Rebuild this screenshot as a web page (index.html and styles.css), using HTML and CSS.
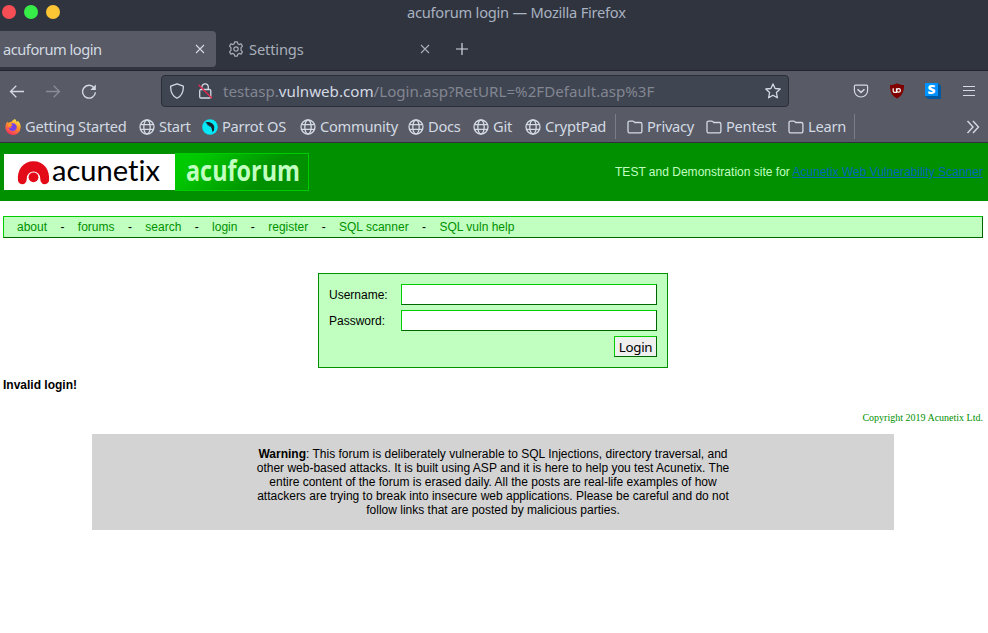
FILE: index.html
```html
<!DOCTYPE html>
<html lang="en">
<head>
<meta charset="utf-8">
<title>acuforum login</title>
<link rel="stylesheet" href="styles.css">
</head>
<body>
<svg class="defs" width="0" height="0">
  <symbol id="globe" viewBox="0 0 16 16"><g fill="none" stroke="currentColor" stroke-width="1.3"><circle cx="8" cy="8" r="7"/><ellipse cx="8" cy="8" rx="3.2" ry="7"/><path d="M1.500 5.700h13M1.500 10.300h13"/></g></symbol>
  <symbol id="folder" viewBox="0 0 16 16"><path d="M2.600 2.100h3.200c.5 0 .8.2 1.100.5l.8.9h5.600a1.600 1.600 0 0 1 1.600 1.600v7.200a1.600 1.600 0 0 1-1.600 1.600H2.600A1.600 1.600 0 0 1 1 12.300V3.700a1.600 1.600 0 0 1 1.600-1.600z" fill="none" stroke="currentColor" stroke-width="1.300"/></symbol>
  <symbol id="close" viewBox="0 0 10 10"><path d="M1 1l8 8M9 1L1 9" fill="none" stroke="currentColor" stroke-width="1.1"/></symbol>
</svg>
<div class="browser">
  <div class="titlebar"><div class="lights"><i class="red"></i><i class="green"></i><i class="amber"></i></div><div class="title">acuforum login — Mozilla Firefox</div></div>
  <div class="tabs">
    <div class="tab active"><span>acuforum login</span><svg class="x" width="10" height="10"><use href="#close"/></svg></div>
    <div class="tab"><svg class="gear" width="16" height="16" viewBox="0 0 16 16"><g fill="none" stroke="currentColor" stroke-width="1.2" stroke-linejoin="round"><path d="M6.7.8h2.6l.5 2 1.3.8 2-.7 1.400 2.300-1.500 1.500v2.600l1.500 1.500-1.400 2.300-2-.7-1.300.8-.5 2H6.700l-.5-2-1.300-.8-2 .7-1.400-2.300L3 9.300V6.700L1.500 5.200l1.400-2.300 2 .7 1.300-.8z"/><circle cx="8" cy="8" r="2.200"/></g></svg><span class="settings">Settings</span><svg class="x" width="10" height="10"><use href="#close"/></svg></div>
    <svg class="plus" width="12" height="12" viewBox="0 0 12 12"><path d="M6 0v12M0 6h12" stroke="currentColor" stroke-width="1.2"/></svg>
  </div>
  <div class="toolbar">
    <svg class="back" width="16" height="16" viewBox="0 0 16 16"><path d="M15 8.500H1.500M7.300 2.700L1.500 8.500l5.800 5.800" fill="none" stroke="currentColor" stroke-width="1.3"/></svg>
    <svg class="forward" width="16" height="16" viewBox="0 0 16 16"><path d="M1 8.500h13.500M8.700 2.700L14.500 8.500l-5.800 5.800" fill="none" stroke="currentColor" stroke-width="1.3"/></svg>
    <svg class="reload" width="16" height="16" viewBox="0 0 16 16"><path d="M13 4.700A6.400 6.400 0 1 0 14.400 9.200" fill="none" stroke="currentColor" stroke-width="1.4"/><path d="M14.800 1.500v5.500H9.300z" fill="currentColor"/></svg>
    <div class="urlbar">
      <svg class="shield" width="16" height="16" viewBox="0 0 16 16"><path d="M8 .8l6.300 2.300c.3 5.700-1.600 9.700-6.300 12.200C3.300 12.800 1.400 8.800 1.700 3.100z" fill="none" stroke="currentColor" stroke-width="1.3" stroke-linejoin="round"/></svg>
      <svg class="lock" width="16" height="16" viewBox="0 0 16 16"><path d="M4.900 6.500V4a3.200 3.200 0 0 1 6.400 0v2.500M4 6.500h8.500a1.300 1.300 0 0 1 1.300 1.300v5.900a1.300 1.300 0 0 1-1.300 1.300H4a1.300 1.300 0 0 1-1.300-1.300V7.800A1.300 1.300 0 0 1 4 6.500z" fill="none" stroke="currentColor" stroke-width="1.300"/><path d="M1.500 1.800L15 15.300" stroke="#e22850" stroke-width="1.4"/></svg>
      <span class="url">testasp.<b>vulnweb.com</b>/Login.asp?RetURL=%2FDefault.asp%3F</span>
      <svg class="star" width="16" height="16" viewBox="0 0 16 16"><path d="M8 .9l2.100 4.600 5.100.5-3.800 3.500 1 5.300L8 12.200l-4.400 2.600 1-5.300L.8 6l5.100-.5z" fill="none" stroke="currentColor" stroke-width="1.300" stroke-linejoin="round"/></svg>
    </div>
    <div class="actions">
      <svg width="16" height="16" viewBox="0 0 16 16"><path d="M2.500 2.200h11c.7 0 1.100.4 1.100 1.100v4.100a6.600 6.600 0 0 1-13.200 0V3.300c0-.7.4-1.100 1.100-1.100z" fill="none" stroke="currentColor" stroke-width="1.200"/><path d="M4.500 6.200L8 9.400l3.500-3.200" fill="none" stroke="currentColor" stroke-width="1.500"/></svg>
      <svg width="16" height="16" viewBox="0 0 16 16"><path d="M8 .3c2 1.300 4.200 1.700 7 1.800 0 6.500-1.300 10.400-7 13.500C2.300 12.500 1 8.600 1 2.100 3.800 2 6 1.600 8 .3z" fill="#800000"/><path d="M4.200 5.300v2.800q0 1.300 1.300 1.300h2V5.300M9.600 5.600a1.800 1.800 0 1 1 0 3.600 1.800 1.800 0 1 1 0-3.600" fill="none" stroke="#fff" stroke-width="1.200"/></svg>
      <svg width="16" height="16" viewBox="0 0 16 16"><path d="M13 0l3 3v13H3l-3-3z" fill="#0059a0"/><path d="M0 0h13v13H0z" fill="#0092ff"/><text x="2.600" y="10.800" class="s-mark" textLength="8" lengthAdjust="spacingAndGlyphs">S</text></svg>
      <svg width="16" height="16" viewBox="0 0 16 16"><path d="M2 3.500h12M2 7.500h12M2 12.500h12" stroke="currentColor" stroke-width="1.200"/></svg>
    </div>
  </div>
  <div class="bookmarks">
    <div class="bm w134"><svg width="16" height="16" viewBox="0 0 16 16"><defs><linearGradient id="fire" x1=".8" y1="0" x2=".3" y2="1"><stop stop-color="#fff44f"/><stop offset=".4" stop-color="#ff9a27"/><stop offset="1" stop-color="#f82c60"/></linearGradient></defs><path d="M10 0c1 1 1.400 2 1.500 3 .7-.1 1.200-.6 1.400-1.200 2 2 3 4.400 2.700 7A7.600 7.600 0 0 1 .4 8C.4 6 1 4 2.400 2.400L3 4c1-.8 2-1.200 3.200-1C6.700 2.300 8 1 10 0z" fill="url(#fire)"/><path d="M5.500 5c3-2 6.500.4 6.300 3.200-.1 2.300-2 3.800-4.100 3.700-2.300-.1-3.800-1.700-3.900-3.500 1 .7 2.200.6 2.900 0C5.500 7.700 5 6.500 5.500 5z" fill="#7542e5"/><path d="M3 4.500l3 .3 1.600 1.500-2 1.300H3z" fill="#ff9826"/></svg><span>Getting Started</span></div>
    <div class="bm w63"><svg width="16" height="16"><use href="#globe"/></svg><span>Start</span></div>
    <div class="bm w98"><svg width="16" height="16" viewBox="0 0 16 16"><circle cx="8" cy="8" r="7.800" fill="#05e8f6"/><path d="M3.200 3.600C6 2 11.500 3.600 12.300 8l-.4 4.600-1-1-.4 2.300c-.6-2.200-.3-4-1.800-6.400L7.600 7.800 7 6.400 5.600 6.500 5.300 5z" fill="#15232b"/></svg><span>Parrot OS</span></div>
    <div class="bm w108"><svg width="16" height="16"><use href="#globe"/></svg><span>Community</span></div>
    <div class="bm w65"><svg width="16" height="16"><use href="#globe"/></svg><span>Docs</span></div>
    <div class="bm w52"><svg width="16" height="16"><use href="#globe"/></svg><span>Git</span></div>
    <div class="bm w90"><svg width="16" height="16"><use href="#globe"/></svg><span>CryptPad</span></div>
    <i class="sep"></i>
    <div class="bm w79"><svg width="16" height="16"><use href="#folder"/></svg><span>Privacy</span></div>
    <div class="bm w82"><svg width="16" height="16"><use href="#folder"/></svg><span>Pentest</span></div>
    <div class="bm w66"><svg width="16" height="16"><use href="#folder"/></svg><span>Learn</span></div>
    <i class="sep"></i>
    <svg class="more" width="14" height="14" viewBox="0 0 14 14"><path d="M1.500 1L7 7l-5.500 6M7 1l5.500 6L7 13" fill="none" stroke="currentColor" stroke-width="1.400"/></svg>
  </div>
</div>
<div class="page">
  <header class="masthead">
    <svg class="logo" width="306" height="38" viewBox="0 0 306 38">
      <defs><linearGradient id="brand" x1="0" y1="0" x2="1" y2=".28"><stop offset="0" stop-color="#00cc00"/><stop offset=".2" stop-color="#00c800"/><stop offset=".8" stop-color="#009000"/></linearGradient></defs>
      <path d="M1 1h171v36H1z" fill="#fff"/>
      <path d="M172 .5h133.500v37H172z" fill="url(#brand)"/>
      <path d="M172 .5h133.500v37H172" fill="none" stroke="#00cc00"/>
      <path d="M19.500 31.200c-2.300 0-4-1.300-4.500-3.500C13.800 16.500 20.500 8.300 30.500 8.300S47.200 16.500 46 27.700c-.5 2.200-2.200 3.500-4.500 3.500-2 0-3-1-3.600-2.600h-14.800c-.6 1.600-1.600 2.600-3.600 2.600z" fill="#e30b17"/>
      <path d="M23.800 25.300a6.700 6.700 0 1 1 13.400 0l.8 6h-15z" fill="#fff"/>
      <circle cx="30.500" cy="24.300" r="4.900" fill="#e30b17"/>
      <text class="name" x="49" y="28" textLength="108" lengthAdjust="spacingAndGlyphs">acunetix</text>
      <text class="forum" x="183" y="28" textLength="114" lengthAdjust="spacingAndGlyphs">acuforum</text>
    </svg>
    <div class="tagline">TEST and Demonstration site for <a href="#">Acunetix Web Vulnerability Scanner</a></div>
  </header>
  <nav class="menu"><a>about</a><i>-</i><a>forums</a><i>-</i><a>search</a><i>-</i><a>login</a><i>-</i><a>register</a><i>-</i><a>SQL scanner</a><i>-</i><a>SQL vuln help</a></nav>
  <form class="login">
    <label for="user">Username:</label><input id="user" type="text">
    <label for="pass">Password:</label><input id="pass" type="password">
    <button type="button">Login</button>
  </form>
  <div class="error">Invalid login!</div>
  <div class="copyright">Copyright 2019 Acunetix Ltd.</div>
  <div class="warning"><p><b>Warning</b>: This forum is deliberately vulnerable to SQL Injections, directory traversal, and<br>other web-based attacks. It is built using ASP and it is here to help you test Acunetix. The<br>entire content of the forum is erased daily. All the posts are real-life examples of how<br>attackers are trying to break into insecure web applications. Please be careful and do not<br>follow links that are posted by malicious parties.</p></div>
</div>
</body>
</html>
```
FILE: styles.css
```css
* { box-sizing: border-box; }
body { margin: 0; background: #fff; overflow: hidden; font: 12px/14px "Liberation Sans", Arial, sans-serif; color: #000; }
svg { display: block; flex: none; }
i { font-style: normal; }
.defs { position: absolute; }

.browser { height: 143px; background: #585a66; border-bottom: 1px solid #2f313d; color: #d3dae3; font: 14.67px/20px "Noto Sans", sans-serif; white-space: nowrap; }
.titlebar { display: flex; height: 31px; background: #30343f; }
.lights { display: flex; gap: 8px; width: 407px; padding: 5px 0 0 2px; }
.lights i { width: 14px; height: 14px; border-radius: 50%; }
.red { background: #f74e56; }
.green { background: #37ee49; }
.amber { background: #fcc536; }
.title { padding-top: 2px; color: #a9b2c0; letter-spacing: -.25px; }

.tabs { display: flex; height: 40px; background: #30343f; border-bottom: 1px solid #22252e; color: #a9afba; }
.tab { display: flex; align-items: center; width: 225px; height: 36px; padding-left: 12px; letter-spacing: -.48px; }
.tab.active { width: 216px; padding-left: 3px; background: #585a66; border-radius: 0 4px 4px 0; color: #d3dae3; }
.tab .x { margin-left: auto; margin-right: 11px; }
.tab:not(.active) .x { margin-right: 11px; }
.settings { letter-spacing: -.15px; }
.gear { margin-right: 5px; }
.plus { margin: 12px 0 0 15px; color: #d3dae3; }

.toolbar { display: flex; align-items: center; height: 40px; }
.back { margin-left: 9px; }
.forward { margin-left: 20px; opacity: .4; }
.reload { margin-left: 20px; }
.urlbar { display: flex; align-items: center; width: 628px; height: 32px; margin-left: 64px; padding: 0 7px; background: #404552; border: 1px solid #2b2e39; border-radius: 4px; }
.lock { margin-left: 12px; }
.url { margin-left: 10px; font-size: 15.15px; color: #828691; }
.url b { font-weight: 400; color: #d3dae3; }
.star { margin-left: auto; }
.actions { display: flex; gap: 20px; margin-left: 64px; }
.s-mark { font: 900 11.5px "Open Sans", sans-serif; fill: #fff; }

.bookmarks { display: flex; align-items: center; height: 31px; padding-left: 5px; letter-spacing: -.26px; }
.bm { display: flex; align-items: center; gap: 4px; flex: none; }
.bm span { padding-bottom: 2px; }
.w134 { width: 134px; }
.w63 { width: 63px; }
.w98 { width: 98px; }
.w108 { width: 108px; }
.w65 { width: 65px; }
.w52 { width: 52px; }
.w90 { width: 90px; }
.w79 { width: 79px; }
.w82 { width: 82px; }
.w66 { width: 66px; }
.sep { width: 1px; height: 25px; margin-right: 11px; background: #7a7d88; }
.more { margin-left: 100px; }

.masthead { display: flex; justify-content: space-between; align-items: center; height: 58px; padding: 0 5px 0 3px; background: #009000; color: #c0ffc0; }
.logo { overflow: visible; }
.name { font: 29px Lato, sans-serif; font-variant-ligatures: none; }
.forum { font: 700 28px "Open Sans", sans-serif; fill: #c0ffc0; }
.tagline { letter-spacing: .01px; }
.tagline a { color: #0066b8; }
.menu { display: flex; height: 22px; margin: 15px 5px 0 3px; padding: 3px 0 0 13px; background: #c0ffc0; border: 1px solid; border-color: #00cc00 #006600 #006600 #00cc00; }
.menu a { color: #009000; }
.menu i { margin: 0 13.4px; }
.login { display: grid; grid-template-columns: 72px 256px; grid-auto-rows: 21px; row-gap: 5px; width: 350px; height: 95px; margin: 35px 0 0 318px; padding: 10px; background: #c0ffc0; border: 1px solid #009000; }
.login label { padding-top: 4px; }
.login input, .login button { margin: 0; padding: 0; border: 1px solid; border-color: #00cc00 #006600 #006600 #00cc00; border-radius: 0; outline: 0; }
.login input { width: 256px; height: 21px; background: #fff; }
.login button { grid-column: 2; justify-self: end; width: 43px; height: 21px; padding-top: 1px; background: #efefef; color: #000; font: 13.33px/18px "Noto Sans", sans-serif; letter-spacing: -.3px; }
.error { margin: 10px 0 0 3px; font-weight: 700; }
.copyright { margin: 19px 5px 0 0; text-align: right; color: #009000; font: 10px/14px "Liberation Serif", serif; }
.warning { width: 802px; height: 96px; margin: 9px 0 0 92px; padding-top: 13px; background: #d3d3d3; text-align: center; }
.warning p { margin: 0; }
```
